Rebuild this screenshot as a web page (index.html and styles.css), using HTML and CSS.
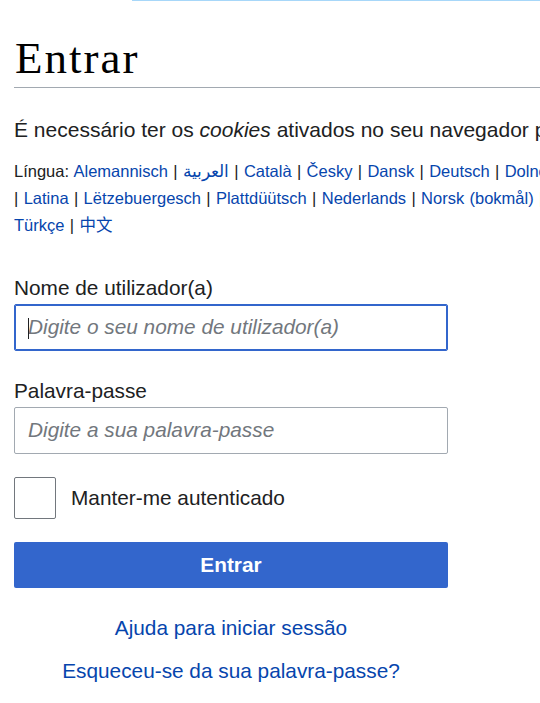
FILE: index.html
```html
<!DOCTYPE html>
<html lang="pt">
<head>
<meta charset="utf-8">
<title>Entrar</title>
<link rel="stylesheet" href="styles.css">
</head>
<body>
<div class="topline"></div>
<main class="content">
  <h1 class="title">Entrar</h1>
  <p class="notice">É necessário ter os <i>cookies</i> ativados no seu navegador para iniciar sessão na Wikipédia.</p>
  <p class="langs">Língua: <a href="#">Alemannisch</a> | <a href="#" lang="ar">العربية</a> | <a href="#">Català</a> | <a href="#">Česky</a> | <a href="#">Dansk</a> | <a href="#">Deutsch</a> | <a href="#">Dolnoserbski</a> | <a href="#">English</a> | <a href="#">Español</a> | <a href="#">Français</a> | <a href="#">Frysk</a><br>| <a href="#">Latina</a> | <a href="#">Lëtzebuergesch</a> | <a href="#">Plattdüütsch</a> | <a href="#">Nederlands</a> | <a href="#">Norsk (bokmål)</a> | <a href="#">Português</a> | <a href="#">Română</a> | <a href="#">Svenska</a><br><a href="#">Türkçe</a> | <a href="#" lang="zh">中文</a></p>

  <form class="login">
    <div class="field">
      <label class="label" for="user">Nome de utilizador(a)</label>
      <div class="input-wrap">
        <input class="input input-focus" id="user" type="text" placeholder="Digite o seu nome de utilizador(a)">
        <span class="caret"></span>
      </div>
    </div>
    <div class="field field-next">
      <label class="label" for="pass">Palavra-passe</label>
      <input class="input" id="pass" type="password" placeholder="Digite a sua palavra-passe">
    </div>
    <div class="remember">
      <span class="checkbox"></span>
      <span class="remember-text">Manter-me autenticado</span>
    </div>
    <button class="submit" type="button">Entrar</button>
    <div class="links">
      <a class="link" href="#">Ajuda para iniciar sessão</a>
      <a class="link" href="#">Esqueceu-se da sua palavra-passe?</a>
    </div>
  </form>
</main>
</body>
</html>
```
FILE: styles.css
```css
html, body {
  margin: 0;
  padding: 0;
  background: #fff;
}
body {
  overflow: hidden;
  width: 540px;
  height: 703px;
  font-family: "Liberation Sans", Arial, sans-serif;
  font-size: 20.8px;
  color: #202122;
}
.topline {
  height: 1px;
  margin-left: 132px;
  background: #a7d7f9;
}
.content {
  padding-left: 14px;
  width: 1200px;
}
.title {
  margin: 30px 0 0 0;
  font-family: "Liberation Serif", "Times New Roman", serif;
  font-weight: normal;
  font-size: 45px;
  letter-spacing: 2px;
  line-height: 54px;
  padding: 0 0 2px 1px;
  color: #000;
  border-bottom: 1px solid #a2a9b1;
}
.notice {
  margin: 27px 0 0 0;
  font-size: 21px;
  line-height: 29px;
  white-space: nowrap;
}
.langs {
  margin: 14px 0 0 0;
  font-size: 16.5px;
  word-spacing: 0.75px;
  line-height: 26.5px;
  white-space: nowrap;
}
.langs a[lang="zh"] {
  font-family: "Noto Sans CJK SC", sans-serif;
}
a {
  color: #0645ad;
  text-decoration: none;
}
.login {
  width: 434px;
  margin-top: 35px;
  display: flex;
  flex-direction: column;
}
.field {
  display: flex;
  flex-direction: column;
}
.field-next {
  margin-top: 26px;
}
.label {
  line-height: 28px;
  margin-bottom: 2px;
}
.input-wrap {
  position: relative;
}
.input {
  box-sizing: border-box;
  width: 434px;
  height: 47px;
  margin: 0;
  padding: 0 13px;
  border: 1px solid #a2a9b1;
  border-radius: 2px;
  font-family: "Liberation Sans", Arial, sans-serif;
  font-size: 20.8px;
  color: #202122;
  background: #fff;
  outline: none;
}
.input::placeholder {
  color: #72777d;
  font-style: italic;
  opacity: 1;
}
.input-focus {
  border-color: #36c;
  box-shadow: inset 0 0 0 1px #36c;
}
.caret {
  position: absolute;
  left: 14px;
  top: 14px;
  width: 1px;
  height: 21px;
  background: #202122;
}
.remember {
  margin-top: 23px;
  display: flex;
  align-items: center;
  gap: 15px;
}
.checkbox {
  box-sizing: border-box;
  width: 42px;
  height: 42px;
  border: 1px solid #72777d;
  border-radius: 2px;
  background: #fff;
}
.submit {
  margin-top: 23px;
  height: 46px;
  width: 434px;
  border: 0;
  border-radius: 2px;
  background: #36c;
  color: #fff;
  font-family: "Liberation Sans", Arial, sans-serif;
  font-size: 20.8px;
  font-weight: bold;
  padding: 0;
}
.links {
  margin-top: 25px;
  display: flex;
  flex-direction: column;
  align-items: center;
  gap: 14.5px;
}
.link {
  line-height: 29px;
}
```
